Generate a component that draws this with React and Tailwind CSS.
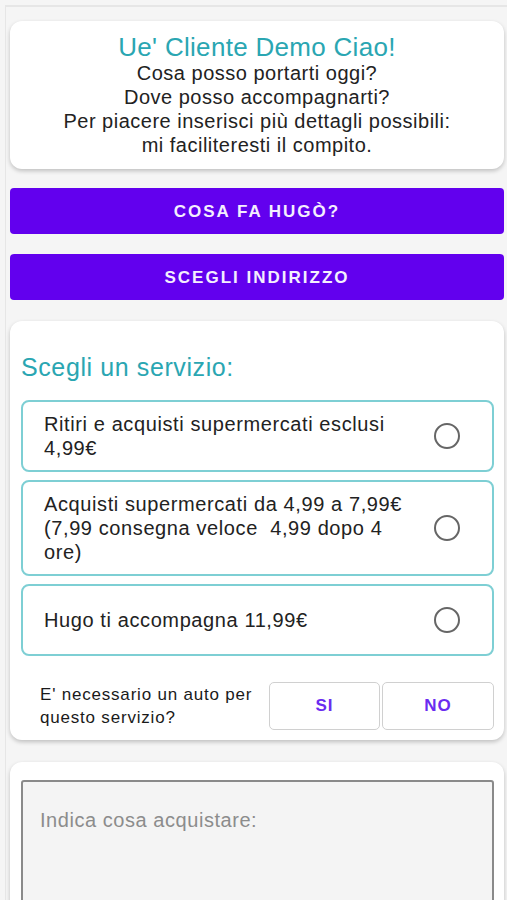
import React from "react";

const options = [
  "Ritiri e acquisti supermercati esclusi 4,99€",
  "Acquisti supermercati da 4,99 a 7,99€ (7,99 consegna veloce\u00a0 4,99 dopo 4 ore)",
  "Hugo ti accompagna 11,99€",
];

export default function App() {
  return (
    <div className="min-h-[900px] bg-[#f5f5f5] pt-[5px]" style={{ fontFamily: '"Liberation Sans", Arial, sans-serif' }}>
      <div className="ml-[5px] border-t-2 border-l border-[#e6e6e6] pl-[4px] pr-[3px] pt-[14px] pb-[40px]">
        {/* Greeting card */}
        <div className="bg-white rounded-[12px] shadow-[0_2px_4px_rgba(0,0,0,0.22)] pt-[12px] pb-[12px] text-center">
          <div className="text-[26px] leading-[28px] tracking-[0.3px] text-[#2aa6b2]">Ue' Cliente Demo Ciao!</div>
          <div className="text-[20px] leading-[24px] tracking-[0.5px] text-[#222]">
            <div>Cosa posso portarti oggi?</div>
            <div>Dove posso accompagnarti?</div>
            <div>Per piacere inserisci più dettagli possibili:</div>
            <div>mi faciliteresti il compito.</div>
          </div>
        </div>

        <button className="mt-[19px] w-full h-[46px] rounded-[4px] bg-[#6200ee] text-[#f4eefe] text-[17px] font-bold tracking-[2px] pt-[1px] flex items-center justify-center">
          COSA FA HUGÒ?
        </button>
        <button className="mt-[20px] w-full h-[46px] rounded-[4px] bg-[#6200ee] text-[#f4eefe] text-[17px] font-bold tracking-[2px] pt-[1px] flex items-center justify-center">
          SCEGLI INDIRIZZO
        </button>

        {/* Service card */}
        <div className="mt-[21px] bg-white rounded-[12px] shadow-[0_2px_4px_rgba(0,0,0,0.22)] pt-[31px] pb-[10px] pl-[11px] pr-[10px]">
          <div className="text-[25px] leading-[30px] tracking-[0.6px] text-[#2aa6b2]">Scegli un servizio:</div>
          <div className="mt-[18px] flex flex-col gap-[8px]">
            {options.map((o, i) => (
              <div key={i} className="min-h-[72px] border-2 border-[#7ecfd4] rounded-[8px] flex items-center pl-[21px] pr-[32px] py-[10px] gap-[20px]">
                <div className="flex-1 text-[20px] leading-[24px] tracking-[0.6px] text-[#222]">{o}</div>
                <div className="w-[26px] h-[26px] rounded-full border-2 border-[#666] shrink-0"></div>
              </div>
            ))}
          </div>
          <div className="mt-[26px] flex items-center">
            <div className="flex-1 pl-[19px] text-[17px] leading-[23px] tracking-[0.8px] text-[#1a1a1a]">
              E' necessario un auto per<br />questo servizio?
            </div>
            <div className="flex gap-[2px]">
              <button className="w-[111px] h-[48px] bg-white border border-[#d0d0d0] rounded-[5px] text-[#6a2cf0] text-[17px] font-bold tracking-[1px]">SI</button>
              <button className="w-[112px] h-[48px] bg-white border border-[#d0d0d0] rounded-[5px] text-[#6a2cf0] text-[17px] font-bold tracking-[1px]">NO</button>
            </div>
          </div>
        </div>

        {/* Text area card */}
        <div className="mt-[22px] bg-white rounded-[12px] shadow-[0_2px_4px_rgba(0,0,0,0.22)] pt-[18px] pb-[18px] pl-[11px] pr-[10px]">
          <textarea
            className="w-full h-[160px] bg-[#f4f4f4] border-2 border-[#8a8a8a] rounded-[3px] pl-[17px] pt-[26px] text-[20px] leading-[24px] tracking-[0.55px] text-[#222] placeholder:text-[#8c8c8c] resize-none outline-none"
            placeholder="Indica cosa acquistare:"
          />
        </div>
      </div>
    </div>
  );
}
